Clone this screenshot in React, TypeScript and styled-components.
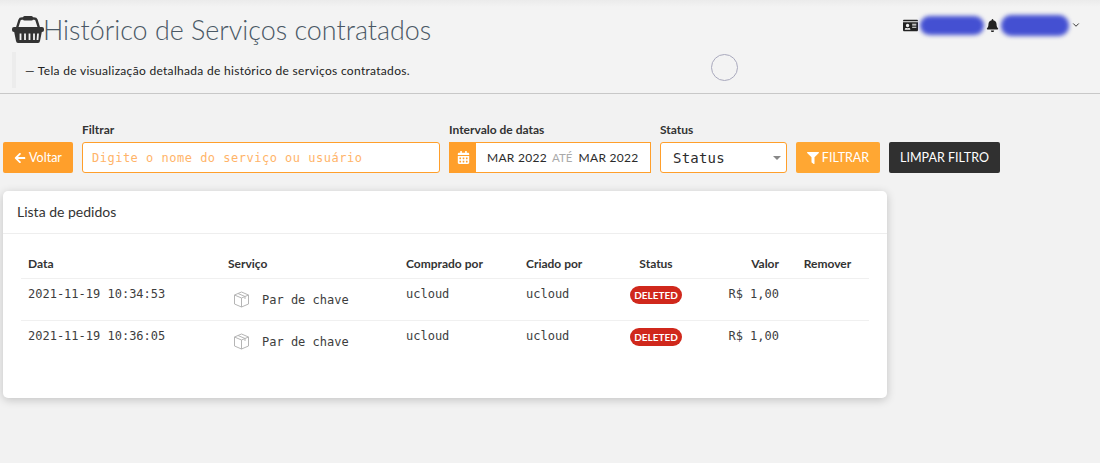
import React from 'react';
import styled, { createGlobalStyle } from 'styled-components';
import { FaArrowLeft, FaFilter, FaCalendarAlt, FaBell, FaIdCard } from 'react-icons/fa';
import { FiChevronDown } from 'react-icons/fi';

const GlobalStyle = createGlobalStyle`
    html, body {
        margin: 0;
        background: #f2f2f2;
        font-family: "Lato", "Open Sans", sans-serif;
        color: #2b2b2b;
    }
    * { box-sizing: border-box; }
`;

const Page = styled.div`
    position: relative;
    width: 1100px;
    height: 463px;
    overflow: hidden;
`;

const Header = styled.header`
    height: 94px;
    border-bottom: 1px solid #c8c8c8;
    padding: 13px 19px 0 12px;
    display: flex;
    justify-content: space-between;
    align-items: flex-start;
    background: linear-gradient(#ebebeb, #f3f3f3 7px);
`;

const TitleRow = styled.div`
    display: flex;
    align-items: center;
    height: 32px;
`;

const Title = styled.h1`
    margin: 0 0 0 -1px;
    font-size: 26.9px;
    font-weight: 300;
    color: #4a5865;
    white-space: nowrap;
`;

const Description = styled.blockquote`
    margin: 7px 0 0;
    height: 36px;
    border-left: 4px solid #ececec;
    padding-left: 9px;
    display: flex;
    align-items: center;
    font-size: 12px;
    letter-spacing: 0.3px;
    color: #222;
`;

const UserBar = styled.div`
    display: flex;
    align-items: center;
    height: 24px;
    color: #222;
`;

const Blob = styled.div<{ $width: number; $height: number }>`
    width: ${(p) => p.$width}px;
    height: ${(p) => p.$height}px;
    margin: 0 2px;
    border-radius: 10px;
    background: #4450d2;
    filter: blur(2px);
`;

const Spinner = styled.div`
    position: absolute;
    left: 711px;
    top: 54px;
    width: 27px;
    height: 27px;
    border-radius: 50%;
    border: 1px solid #a9a9bd;
`;

const FilterRow = styled.form`
    display: flex;
    align-items: flex-end;
    gap: 9px;
    margin-top: 30px;
    padding-left: 3px;
    height: 49px;
`;

const Field = styled.div<{ $width: number }>`
    width: ${(p) => p.$width}px;
`;

const Label = styled.label`
    display: block;
    font-size: 12px;
    font-weight: 700;
    margin-bottom: 6px;
    line-height: 13px;
    color: #333;
`;

const Button = styled.button<{ $width: number; $color: string }>`
    width: ${(p) => p.$width}px;
    height: 31px;
    border: 0;
    border-radius: 2px;
    background: ${(p) => p.$color};
    color: #fff;
    font-family: inherit;
    font-size: 12.5px;
    display: flex;
    align-items: center;
    justify-content: center;
    gap: 3px;
    padding: 0;
`;

const TextInput = styled.input`
    width: 100%;
    height: 31px;
    border: 1px solid #ff9f2b;
    border-radius: 3px;
    background: #fff;
    padding: 0 9px;
    font-family: "DejaVu Sans Mono", monospace;
    font-size: 12px;
    letter-spacing: 0.5px;
    &::placeholder { color: #ffb469; opacity: 1; }
`;

const DateGroup = styled.div`
    display: flex;
    height: 31px;
    border: 1px solid #ff9f2b;
    background: #fff;
    font-size: 12px;
    align-items: center;
`;

const DateAddon = styled.span`
    width: 26px;
    align-self: stretch;
    background: #ff9f2b;
    color: #fff;
    font-size: 13px;
    display: flex;
    align-items: center;
    justify-content: center;
`;

const DateValue = styled.span`
    margin-left: 11px;
    letter-spacing: 0.3px;
    white-space: nowrap;
`;

const DateSeparator = styled.span`
    margin-left: 5px;
    margin-right: -5px;
    color: #aaa;
    font-size: 11.5px;
`;

const StatusSelect = styled.div`
    height: 31px;
    border: 1px solid #ff9f2b;
    border-radius: 3px;
    background: #fff;
    padding: 0 5px 0 12px;
    display: flex;
    align-items: center;
    justify-content: space-between;
    font-family: "DejaVu Sans Mono", monospace;
    font-size: 14px;
    letter-spacing: 0.2px;
    &::after {
        content: '';
        border-left: 4px solid transparent;
        border-right: 4px solid transparent;
        border-top: 4px solid #888;
    }
`;

const Card = styled.section`
    margin: 18px 0 0 3px;
    width: 884px;
    height: 207px;
    background: #fff;
    border-radius: 5px;
    box-shadow: 0 2px 10px rgba(0, 0, 0, 0.2);
`;

const CardHeader = styled.div`
    height: 43px;
    border-bottom: 1px solid #eee;
    padding: 0 0 2px 14px;
    display: flex;
    align-items: center;
    font-size: 14px;
    color: #333;
`;

const Table = styled.table`
    margin: 22px 0 0 18px;
    width: 848px;
    table-layout: fixed;
    border-collapse: collapse;
`;

const Th = styled.th<{ $width: number; $align?: string }>`
    width: ${(p) => p.$width}px;
    height: 22px;
    padding: 0 7px 7px;
    text-align: ${(p) => p.$align || 'left'};
    font-size: 12px;
    font-weight: 700;
    color: #333;
    border-bottom: 1px solid #f0f0f0;
`;

const Row = styled.tr`
    & + & td { border-top: 1px solid #f0f0f0; }
`;

const Td = styled.td<{ $align?: string }>`
    height: 42px;
    padding: 8px 7px 0;
    vertical-align: top;
    text-align: ${(p) => p.$align || 'left'};
    font-family: "DejaVu Sans Mono", monospace;
    font-size: 12px;
    color: #3d3d3d;
`;

const ServiceCell = styled.div`
    display: flex;
    align-items: center;
    gap: 12px;
    padding-left: 5px;
    margin-top: 4px;
`;

const Badge = styled.span`
    display: block;
    width: 52px;
    height: 18px;
    margin: -1px auto 0;
    line-height: 18px;
    border-radius: 9px;
    background: #d0281c;
    color: #fff;
    text-align: center;
    font-family: "Lato", sans-serif;
    font-size: 10px;
    font-weight: 700;
`;

const orders = [
    { date: '2021-11-19 10:34:53' },
    { date: '2021-11-19 10:36:05' },
];

const BasketIcon = () => (
    <svg width="32" height="28" viewBox="0 0 32 28">
        <path d="M5 13 L7.5 5 Q8 3.5 10 3.5 H22 Q24 3.5 24.5 5 L27 13" fill="none" stroke="#333" strokeWidth="2.4" />
        <rect x="11" y="1" width="10" height="4.5" rx="1.5" fill="#333" />
        <rect x="0" y="12" width="32" height="5" rx="2" fill="#333" />
        <path d="M2 16 H30 L28 26 Q27.7 28 26 28 H6 Q4.3 28 4 26 Z" fill="#333" />
        <path d="M8.5 18.5 V25 M13 18.5 V25 M17.5 18.5 V25 M22 18.5 V25 M26 18.5 L25.5 25" stroke="#f2f2f2" strokeWidth="1.8" />
    </svg>
);

const CubeIcon = () => (
    <svg width="17" height="17" viewBox="0 0 17 17" fill="none" stroke="#b5b5b5" strokeWidth="1">
        <path d="M8.5 1 L15.5 4 V13 L8.5 16 L1.5 13 V4 Z" />
        <path d="M1.5 4 L8.5 7 L15.5 4 M8.5 7 V16 M5 2.5 L12 5.5 V8" />
    </svg>
);

const App: React.FC<{}> = () => (
    <Page>
        <GlobalStyle />
        <Header>
            <div>
                <TitleRow>
                    <BasketIcon />
                    <Title>Histórico de Serviços contratados</Title>
                </TitleRow>
                <Description>— Tela de visualização detalhada de histórico de serviços contratados.</Description>
            </div>
            <UserBar>
                <FaIdCard size={15} />
                <Blob $width={64} $height={19} />
                <FaBell size={13} />
                <Blob $width={68} $height={21} />
                <FiChevronDown size={10} color="#111" />
            </UserBar>
        </Header>
        <Spinner />
        <FilterRow>
            <Button type="button" $width={70} $color="#ff9f2b"><FaArrowLeft size={12} />Voltar</Button>
            <Field $width={358}>
                <Label>Filtrar</Label>
                <TextInput placeholder="Digite o nome do serviço ou usuário" />
            </Field>
            <Field $width={202}>
                <Label>Intervalo de datas</Label>
                <DateGroup>
                    <DateAddon><FaCalendarAlt /></DateAddon>
                    <DateValue>MAR 2022</DateValue>
                    <DateSeparator>ATÉ</DateSeparator>
                    <DateValue>MAR 2022</DateValue>
                </DateGroup>
            </Field>
            <Field $width={127}>
                <Label>Status</Label>
                <StatusSelect>Status</StatusSelect>
            </Field>
            <Button type="button" $width={84} $color="#ffa733"><FaFilter size={12} />FILTRAR</Button>
            <Button type="button" $width={111} $color="#303030">LIMPAR FILTRO</Button>
        </FilterRow>
        <Card>
            <CardHeader>Lista de pedidos</CardHeader>
            <Table>
                <thead>
                    <tr>
                        <Th $width={200}>Data</Th>
                        <Th $width={178}>Serviço</Th>
                        <Th $width={120}>Comprado por</Th>
                        <Th $width={104}>Criado por</Th>
                        <Th $width={66} $align="center">Status</Th>
                        <Th $width={97} $align="right">Valor</Th>
                        <Th $width={83} $align="center">Remover</Th>
                    </tr>
                </thead>
                <tbody>
                    {orders.map((order) => (
                        <Row key={order.date}>
                            <Td>{order.date}</Td>
                            <Td><ServiceCell><CubeIcon />Par de chave</ServiceCell></Td>
                            <Td>ucloud</Td>
                            <Td>ucloud</Td>
                            <Td $align="center"><Badge>DELETED</Badge></Td>
                            <Td $align="right">R$ 1,00</Td>
                            <Td />
                        </Row>
                    ))}
                </tbody>
            </Table>
        </Card>
    </Page>
);

export default App;
